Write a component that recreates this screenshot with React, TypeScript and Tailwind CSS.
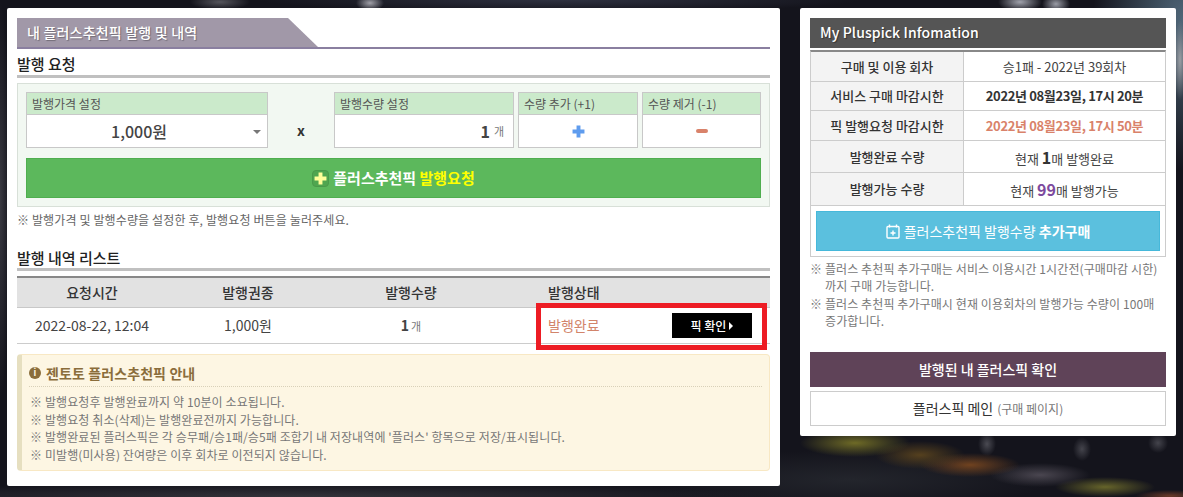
const FONT = "font-['Noto_Sans_CJK_KR','Noto_Sans',sans-serif]";

function FieldHead({ children }: { children: string }) {
  return (
    <div className="h-[22px] border-b border-[#c8c8c8] bg-[#cbeacb] pl-[5px] text-[12px] leading-[21px] text-[#555]">
      {children}
    </div>
  );
}

function InfoRow({ label, h, children }: { label: string; h: string; children: React.ReactNode }) {
  return (
    <div className={`flex border-b border-[#ccc] ${h}`}>
      <div className="flex w-[153px] items-center justify-center border-r border-[#ccc] bg-[#f3f3f3] font-medium text-[#333]">{label}</div>
      <div className="flex flex-1 items-center justify-center text-[#444]">{children}</div>
    </div>
  );
}

function PlusGlyph({ color, size }: { color: string; size: number }) {
  return (
    <svg width={size} height={size} viewBox="0 0 12 12" fill={color}>
      <path d="M4.2 0.5h3.6v3.7h3.7v3.6H7.8v3.7H4.2V7.8H0.5V4.2h3.7z" />
    </svg>
  );
}

export default function App() {
  return (
    <div className={`${FONT} relative flex h-[497px] w-[1183px] gap-[20px] overflow-hidden bg-[#14141c] bg-[radial-gradient(ellipse_14px_8px_at_370px_3px,#a0a0a8_0%,transparent_100%),radial-gradient(ellipse_30px_8px_at_220px_2px,#55555c_0%,transparent_100%),radial-gradient(ellipse_22px_10px_at_1020px_2px,#a0a2ac_0%,transparent_100%),radial-gradient(ellipse_14px_10px_at_1056px_4px,#9a9ca6_0%,transparent_100%),radial-gradient(ellipse_300px_12px_at_560px_0px,#2e3140_0%,transparent_100%),radial-gradient(ellipse_7px_40px_at_1180px_60px,#9a9ea4_0%,transparent_100%),radial-gradient(ellipse_90px_150px_at_1183px_20px,#4f6678_0%,transparent_100%),radial-gradient(ellipse_55px_14px_at_855px_443px,#6e6a26_0%,transparent_100%),radial-gradient(ellipse_45px_14px_at_920px_455px,#55401e_0%,transparent_100%),radial-gradient(ellipse_50px_12px_at_970px_465px,#70421f_0%,transparent_100%),radial-gradient(ellipse_50px_12px_at_1040px_475px,#4a4650_0%,transparent_100%),radial-gradient(ellipse_50px_10px_at_1105px_487px,#66642a_0%,transparent_100%),radial-gradient(ellipse_35px_6px_at_1170px_496px,#6a3a28_0%,transparent_100%),radial-gradient(ellipse_9px_12px_at_987px_444px,#4a4a52_0%,transparent_100%),radial-gradient(ellipse_9px_12px_at_1082px_449px,#44444c_0%,transparent_100%),radial-gradient(ellipse_10px_10px_at_1158px_443px,#44444c_0%,transparent_100%),radial-gradient(ellipse_200px_30px_at_850px_480px,#23252c_0%,transparent_100%),radial-gradient(ellipse_500px_14px_at_300px_497px,#33333a_0%,transparent_100%),radial-gradient(ellipse_10px_200px_at_0px_200px,#3a3a42_0%,transparent_100%)] pl-[7px] pt-[8px]`}>
      {/* left panel */}
      <div className="h-[478px] w-[773px] rounded-[2px] bg-white px-[10px] pt-[10px]">
        <div className="h-[31px] border-b-2 border-[#8a7fa0]">
          <div className="h-[29px] w-[301px] bg-[#a198a8] pl-[10px] text-[14px] font-medium leading-[29px] tracking-[0.2px] text-white [clip-path:polygon(0_0,271px_0,100%_100%,0_100%)] [text-shadow:1px_1px_1px_rgba(0,0,0,0.3)]">
            내 플러스추천픽 발행 및 내역
          </div>
        </div>
        <div className="h-[29px] border-b-[3px] border-[#c0c0c0] text-[15px] font-medium leading-[30px] text-[#222]">발행 요청</div>

        <div className="mt-[5px] h-[124px] border border-[#d8e0d8] bg-[#f2f8f2] px-[8px] pt-[8px]">
          <div className="flex h-[56px]">
            <div className="h-full w-[242px] border border-[#c8c8c8] bg-white">
              <FieldHead>발행가격 설정</FieldHead>
              <div className="relative flex h-[32px] items-center justify-center pr-[16px] text-[16px] font-medium text-[#444]">
                1,000원
                <span className="absolute right-[6px] top-[15px] h-0 w-0 border-x-[4px] border-t-[4px] border-x-transparent border-t-[#777]" />
              </div>
            </div>
            <div className="flex w-[66px] items-center justify-center pt-[20px] text-[14px] font-bold text-[#333]">x</div>
            <div className="h-full w-[180px] border border-[#c8c8c8] bg-white">
              <FieldHead>발행수량 설정</FieldHead>
              <div className="flex h-[32px] items-center justify-end pr-[9px] text-[#444]">
                <span className="text-[16px] font-bold">1</span>
                <span className="ml-[4px] text-[11px] text-[#777]">개</span>
              </div>
            </div>
            <div className="ml-[4px] h-full w-[120px] border border-[#c8c8c8] bg-white">
              <FieldHead>수량 추가 (+1)</FieldHead>
              <div className="flex h-[32px] items-center justify-center">
                <PlusGlyph color="#5f9cee" size={13} />
              </div>
            </div>
            <div className="ml-[4px] h-full w-[119px] border border-[#c8c8c8] bg-white">
              <FieldHead>수량 제거 (-1)</FieldHead>
              <div className="flex h-[32px] items-center justify-center">
                <span className="h-[4px] w-[12px] rounded-[2px] bg-[#d9826a]" />
              </div>
            </div>
          </div>
          <div className="mt-[10px] flex h-[40px] items-center justify-center border border-[#4fae4f] bg-[#5cb85c] text-[15px] font-bold text-white">
            <span className="mr-[4px] flex h-[17px] w-[17px] items-center justify-center rounded-[4px] border border-[#4a9a4a] bg-[#4fa64f]">
              <PlusGlyph color="#ffff99" size={13} />
            </span>
            플러스추천픽&nbsp;<span className="text-[#ffff00]">발행요청</span>
          </div>
        </div>

        <p className="mt-[3px] h-[20px] text-[12px] leading-[20px] tracking-[0.13px] text-[#666]">※ 발행가격 및 발행수량을 설정한 후, 발행요청 버튼을 눌러주세요.</p>

        <div className="mt-[17px] h-[24px] border-b-[3px] border-[#c0c0c0] text-[15px] font-medium leading-[21px] text-[#222]">발행 내역 리스트</div>

        <div className="mt-[5px] grid h-[32px] grid-cols-[150px_162px_164px_1fr] border-y border-t-2 border-y-[#c8c8c8] border-t-[#888] bg-[#e2e2e2] text-[14px] font-medium leading-[29px] text-[#333]">
          <div className="text-center">요청시간</div>
          <div className="text-center">발행권종</div>
          <div className="text-center">발행수량</div>
          <div className="pl-[55px]">발행상태</div>
        </div>
        <div className="grid h-[36px] grid-cols-[150px_162px_164px_1fr] items-center border-b border-[#ccc] text-[14px] text-[#444]">
          <div className="text-center">2022-08-22, 12:04</div>
          <div className="text-center">1,000원</div>
          <div className="text-center">
            <span className="font-bold">1</span>
            <span className="ml-[2px] text-[11px] text-[#777]">개</span>
          </div>
          <div className="flex items-center justify-between pl-[55px] pr-[18px]">
            <span className="text-[#d2846a]">발행완료</span>
            <span className="flex h-[25px] w-[80px] items-center justify-center bg-black text-[12px] font-medium text-white">
              픽 확인
              <span className="ml-[3px] h-0 w-0 border-y-[4px] border-l-[4px] border-y-transparent border-l-white" />
            </span>
          </div>
        </div>

        <div className="mt-[10px] h-[117px] rounded-[4px] border border-[#f8e8c4] border-l-[5px] border-l-[#e6dfc0] bg-[#fdf6e3] px-[7px] pt-[9px]">
          <div className="flex h-[23px] items-center border-b border-dotted border-[#d8d0b8] pb-[4px] text-[14px] font-bold tracking-[0.1px] text-[#8a6d3b]">
            <span className="mr-[5px] flex h-[12px] w-[12px] items-center justify-center rounded-full bg-[#8a6d3b] text-[9px] font-bold text-[#fdf6e3]">i</span>
            젠토토 플러스추천픽 안내
          </div>
          <div className="mt-[6px] pl-[1px] text-[12px] leading-[17.5px] tracking-[0.1px] text-[#777]">
            <p>※ 발행요청후 발행완료까지 약 10분이 소요됩니다.</p>
            <p>※ 발행요청 취소(삭제)는 발행완료전까지 가능합니다.</p>
            <p>※ 발행완료된 플러스픽은 각 승무패/승1패/승5패 조합기 내 저장내역에 '플러스' 항목으로 저장/표시됩니다.</p>
            <p>※ 미발행(미사용) 잔여량은 이후 회차로 이전되지 않습니다.</p>
          </div>
        </div>
      </div>

      {/* right panel */}
      <div className="h-[428px] w-[376px] rounded-[2px] bg-white px-[10px] pt-[10px]">
        <div className="h-[30px] bg-[#555] pl-[10px] text-[14px] font-medium leading-[29px] tracking-[0.1px] text-white [text-shadow:1px_1px_1px_rgba(0,0,0,0.4)]">My Pluspick Infomation</div>
        <div className="mt-[2px] border-x border-t-[2px] border-x-[#ccc] border-t-[#888] text-[13px]">
          <InfoRow label="구매 및 이용 회차" h="h-[30px]">승1패 - 2022년 39회차</InfoRow>
          <InfoRow label="서비스 구매 마감시한" h="h-[29px]"><b className="font-bold tracking-[-0.36px] text-[#333]">2022년 08월23일, 17시 20분</b></InfoRow>
          <InfoRow label="픽 발행요청 마감시한" h="h-[30px]"><b className="font-bold tracking-[-0.36px] text-[#d9826a]">2022년 08월23일, 17시 50분</b></InfoRow>
          <InfoRow label="발행완료 수량" h="h-[32px]">
            <span>현재 <b className="text-[16px] font-bold text-[#333]">1</b>매 발행완료</span>
          </InfoRow>
          <InfoRow label="발행가능 수량" h="h-[33px]">
            <span>현재 <b className="text-[16px] font-bold text-[#7d4a9e]">99</b>매 발행가능</span>
          </InfoRow>
          <div className="h-[51px] border-b border-[#ccc] px-[5px] pt-[5px]">
            <div className="flex h-[40px] items-center justify-center border border-[#46b8da] bg-[#5bc0de] text-[14px] text-white">
              <svg width="14" height="15" viewBox="0 0 14 15" className="mr-[4px]" fill="none" stroke="white" strokeWidth="1.4">
                <rect x="1" y="2.5" width="12" height="11.5" rx="1" />
                <path d="M3.5 0.5v3M10.5 0.5v3M7 6.5v5M4.5 9h5" />
              </svg>
              플러스추천픽 발행수량&nbsp;<b className="font-bold">추가구매</b>
            </div>
          </div>
        </div>
        <div className="mt-[3px] text-[12px] leading-[17px] tracking-[0.1px] text-[#777]">
          <p className="pl-[15px] -indent-[15px]">※ 플러스 추천픽 추가구매는 서비스 이용시간 1시간전(구매마감 시한) 까지 구매 가능합니다.</p>
          <p className="mt-[1px] pl-[15px] -indent-[15px]">※ 플러스 추천픽 추가구매시 현재 이용회차의 발행가능 수량이 100매 증가합니다.</p>
        </div>
        <div className="mt-[23px] flex h-[35px] items-center justify-center bg-[#5f4358] text-[14px] font-medium text-white">발행된 내 플러스픽 확인</div>
        <div className="mt-[4px] flex h-[35px] items-center justify-center border border-[#ccc] text-[14px] text-[#333]">
          플러스픽 메인<span className="ml-[4px] text-[12px] text-[#777]">(구매 페이지)</span>
        </div>
      </div>

      {/* annotation over the row */}
      <div className="absolute left-[536px] top-[303px] h-[47px] w-[231px] border-[5px] border-[#ed1c24]" />
    </div>
  );
}
